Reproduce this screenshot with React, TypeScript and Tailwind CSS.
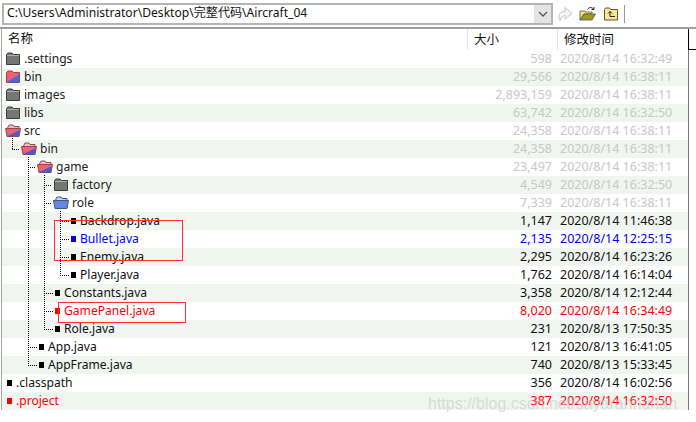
const font = "[font-family:'Noto_Sans','Noto_Sans_CJK_SC',sans-serif]";

type Kind = 'gray' | 'split' | 'splitOpen' | 'blueOpen' | 'file';

type Row = {
  name: string;
  size: string;
  date: string;
  kind: Kind;
  pad: string;
  tone?: 'muted' | 'blue' | 'red';
};

const rows: Row[] = [
  { name: '.settings', size: '598', date: '2020/8/14 16:32:49', kind: 'gray', pad: 'pl-[3px]', tone: 'muted' },
  { name: 'bin', size: '29,566', date: '2020/8/14 16:38:11', kind: 'split', pad: 'pl-[3px]', tone: 'muted' },
  { name: 'images', size: '2,893,159', date: '2020/8/14 16:38:11', kind: 'gray', pad: 'pl-[3px]', tone: 'muted' },
  { name: 'libs', size: '63,742', date: '2020/8/14 16:32:50', kind: 'gray', pad: 'pl-[3px]', tone: 'muted' },
  { name: 'src', size: '24,358', date: '2020/8/14 16:38:11', kind: 'splitOpen', pad: 'pl-[3px]', tone: 'muted' },
  { name: 'bin', size: '24,358', date: '2020/8/14 16:38:11', kind: 'splitOpen', pad: 'pl-[19px]', tone: 'muted' },
  { name: 'game', size: '23,497', date: '2020/8/14 16:38:11', kind: 'splitOpen', pad: 'pl-[35px]', tone: 'muted' },
  { name: 'factory', size: '4,549', date: '2020/8/14 16:32:50', kind: 'gray', pad: 'pl-[51px]', tone: 'muted' },
  { name: 'role', size: '7,339', date: '2020/8/14 16:38:11', kind: 'blueOpen', pad: 'pl-[51px]', tone: 'muted' },
  { name: 'Backdrop.java', size: '1,147', date: '2020/8/14 11:46:38', kind: 'file', pad: 'pl-[69px]' },
  { name: 'Bullet.java', size: '2,135', date: '2020/8/14 12:25:15', kind: 'file', pad: 'pl-[69px]', tone: 'blue' },
  { name: 'Enemy.java', size: '2,295', date: '2020/8/14 16:23:26', kind: 'file', pad: 'pl-[69px]' },
  { name: 'Player.java', size: '1,762', date: '2020/8/14 16:14:04', kind: 'file', pad: 'pl-[69px]' },
  { name: 'Constants.java', size: '3,358', date: '2020/8/14 12:12:44', kind: 'file', pad: 'pl-[53px]' },
  { name: 'GamePanel.java', size: '8,020', date: '2020/8/14 16:34:49', kind: 'file', pad: 'pl-[53px]', tone: 'red' },
  { name: 'Role.java', size: '231', date: '2020/8/13 17:50:35', kind: 'file', pad: 'pl-[53px]' },
  { name: 'App.java', size: '121', date: '2020/8/13 16:41:05', kind: 'file', pad: 'pl-[37px]' },
  { name: 'AppFrame.java', size: '740', date: '2020/8/13 15:33:45', kind: 'file', pad: 'pl-[37px]' },
  { name: '.classpath', size: '356', date: '2020/8/14 16:02:56', kind: 'file', pad: 'pl-[5px]' },
  { name: '.project', size: '387', date: '2020/8/14 16:32:50', kind: 'file', pad: 'pl-[5px]', tone: 'red' },
];

function FolderIcon({ kind }: { kind: Kind }) {
  if (kind === 'gray') {
    return (
      <svg width="16" height="14" viewBox="0 0 16 14" className="shrink-0">
        <path d="M1.5 2.5 L3 1 H7 L8.5 2.5 H14.5 V12.5 H1.5 Z" fill="#767676" stroke="#3c3c3c" />
        <path d="M2 3.5 H14" stroke="#b0b0b0" />
      </svg>
    );
  }
  if (kind === 'split') {
    return (
      <svg width="16" height="14" viewBox="0 0 16 14" className="shrink-0">
        <path d="M1.5 2.5 L3 1 H7 L8.5 2.5 H14.5 V12.5 H1.5 Z" fill="#f2606e" stroke="#8a4a58" />
        <path d="M2 12 L14 4.5 V12 Z" fill="#4a68e4" />
      </svg>
    );
  }
  const blue = kind === 'blueOpen';
  return (
    <svg width="16" height="14" viewBox="0 0 16 14" className="shrink-0">
      <path d="M2.5 4 L4 1 H8 L9 2.5 H14 V5 H2.5 Z" fill={blue ? '#c4d4f4' : '#f8b8be'} stroke={blue ? '#445588' : '#884a58'} />
      <path d="M0.5 4.5 H15.5 L14 12.5 H2 Z" fill={blue ? '#6488e0' : '#f2606e'} stroke={blue ? '#445588' : '#884a58'} />
      {!blue && <path d="M2.5 12 L15 6 L13.6 12 Z" fill="#3f5cdc" />}
    </svg>
  );
}

function RowIcon({ row }: { row: Row }) {
  if (row.kind !== 'file') return <FolderIcon kind={row.kind} />;
  const color = row.tone === 'red' ? 'bg-[#ff0000]' : row.tone === 'blue' ? 'bg-[#0000ff]' : 'bg-black';
  return (
    <span className="flex w-[9px] shrink-0 items-center">
      <span className={`h-[6px] w-[5px] ${color}`} />
    </span>
  );
}

// dotted tree connectors, page coordinates
function TreeLines() {
  const v = [
    [12, 138, 149],
    [28, 157, 365],
    [44, 175, 329],
    [60, 211, 275],
  ];
  const h = [
    [12, 20, 149],
    [28, 36, 167],
    [44, 52, 185],
    [44, 52, 203],
    [60, 70, 221],
    [60, 70, 239],
    [60, 70, 257],
    [60, 70, 275],
    [44, 54, 293],
    [44, 54, 311],
    [44, 54, 329],
    [28, 38, 347],
    [28, 38, 365],
  ];
  return (
    <svg width="80" height="422" className="pointer-events-none absolute left-0 top-0">
      {v.map(([x, y1, y2]) => (
        <line key={`v${x}`} x1={x + 0.5} x2={x + 0.5} y1={y1} y2={y2} stroke="#000" strokeDasharray="1 1" />
      ))}
      {h.map(([x1, x2, y]) => (
        <line key={`h${x1}-${y}`} x1={x1} x2={x2} y1={y + 0.5} y2={y + 0.5} stroke="#000" strokeDasharray="1 1" />
      ))}
    </svg>
  );
}

function Toolbar() {
  return (
    <div className="flex h-[27px] items-center bg-white pl-[2px]">
      <div className="flex h-[22px] w-[551px] items-center border-2 border-[#b4b4b4] pl-[3px] text-[12.1px] text-[#111]">
        <span className="flex-1 whitespace-nowrap">C:\Users\Administrator\Desktop\完整代码\Aircraft_04</span>
        <span className="flex h-full w-[17px] items-center justify-center bg-[#e4e4e4]">
          <svg width="10" height="6" viewBox="0 0 10 6">
            <path d="M1 1 L5 5 L9 1" fill="none" stroke="#555" strokeWidth="1.3" />
          </svg>
        </span>
      </div>
      <svg width="16" height="17" viewBox="0 0 16 17" className="ml-[4px]">
        <path d="M3 15.5 C0.5 10 3 6.5 8 6.5 V2.5 L15 8.5 L8 14 V10.5 C6 10.5 4 12 3 15.5 Z" fill="#f6f6f6" stroke="#c4c4c4" />
      </svg>
      <svg width="17" height="15" viewBox="0 0 17 15" className="ml-[6px]">
        <path d="M1 5 H6 L7 6 H13 V8 H5 L1 14 Z" fill="#f8e070" stroke="#555" strokeWidth="0.8" />
        <path d="M1 14 L5 8 H16.5 L13 14 Z" fill="#9c9a20" stroke="#555" strokeWidth="0.8" />
        <path d="M8.5 3.5 C10 1 12.5 1 14.5 3 M15 1 V3.5 H12.5" fill="none" stroke="#222" />
      </svg>
      <svg width="16" height="14" viewBox="0 0 16 14" className="ml-[7px]">
        <path d="M1.5 2.5 L2.5 1 H6.5 L7.5 2.5 H14.5 V13 H1.5 Z" fill="#fbe98a" stroke="#555" />
        <path d="M5 6.5 L7 4.5 L9 6.5 M7 4.5 V9.5 H12" fill="none" stroke="#222" />
      </svg>
      <span className="ml-[5px] h-[18px] w-px bg-[#999]" />
    </div>
  );
}

export default function App() {
  return (
    <div className={`relative h-[422px] w-[696px] overflow-hidden bg-white ${font}`}>
      <Toolbar />
      <div className="h-[2px] bg-[#a0a0a0]" />
      <div className="ml-[1px] w-[688px] border-l border-r border-l-[#a8a8a8] border-r-[#777]">
        <div className="flex h-[21px] items-center text-[12.5px] text-[#111]">
          <span className="w-[465px] pl-[6px]">名称</span>
          <span className="h-full w-[90px] border-l border-[#e4e4e4] pl-[6px] leading-[21px]">大小</span>
          <span className="h-full flex-1 border-l border-[#e4e4e4] pl-[6px] leading-[21px]">修改时间</span>
        </div>
        <div>
          {rows.map((row, i) => {
            const text =
              row.tone === 'muted'
                ? 'text-[#c8c8c8]'
                : row.tone === 'blue'
                  ? 'text-[#0000ff]'
                  : row.tone === 'red'
                    ? 'text-[#ff0000]'
                    : 'text-[#111]';
            const nameText = row.tone === 'muted' ? 'text-[#222]' : text;
            return (
              <div
                key={row.name + i}
                className={`flex h-[18px] items-center text-[12.5px] leading-[18px] ${i % 2 === 1 ? 'bg-[#f0f5ef]' : ''}`}
              >
                <div className={`flex w-[465px] items-center text-[12.1px] ${row.pad}`}>
                  <RowIcon row={row} />
                  <span className={`whitespace-nowrap ${row.kind === 'file' ? '' : 'ml-[3px]'} ${nameText}`}>{row.name}</span>
                </div>
                <span className={`w-[85px] text-right ${text}`}>{row.size}</span>
                <span className={`ml-[8px] whitespace-nowrap ${text}`}>{row.date}</span>
              </div>
            );
          })}
        </div>
      </div>
      <TreeLines />
      {/* corner of the header, right of the column edge */}
      <div className="absolute left-[688px] top-[29px] h-[21px] w-[8px] border-b border-l border-black" />
      <div className="absolute left-[54px] top-[220px] h-[41px] w-[129px] border border-[#ff3030]" />
      <div className="absolute left-[58px] top-[302px] h-[21px] w-[128px] border border-[#ff3030]" />
      <span className="absolute left-[428px] top-[392px] whitespace-nowrap font-['Liberation_Sans'] text-[16px] text-[#c8c8c8]/60">
        https://blog.csdn.net/sayaranhuhan
      </span>
    </div>
  );
}
